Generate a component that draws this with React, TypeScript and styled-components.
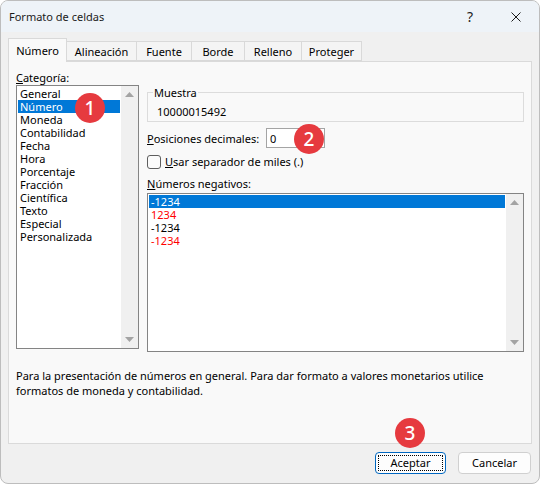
import React, { FC, ReactNode } from 'react'
import styled, { createGlobalStyle } from 'styled-components'

const GlobalStyle = createGlobalStyle`
  html, body {
    margin: 0;
    padding: 0;
    background: #ffffff;
  }
  body {
    font-family: 'Noto Sans', 'Segoe UI', sans-serif;
    font-size: 11px;
    color: #000;
  }
  * {
    box-sizing: border-box;
  }
`

const Dialog = styled.div`
  width: 540px;
  height: 484px;
  display: flex;
  flex-direction: column;
  background: #f0f0f0;
  border: 1px solid #bdbdbd;
  border-radius: 8px;
  overflow: hidden;
`

const TitleBar = styled.div`
  height: 31px;
  flex-shrink: 0;
  display: flex;
  align-items: center;
  justify-content: space-between;
  padding-left: 8px;
  background: #eef3f8;
  color: #1b1b1b;
`

const Caption = styled.div`
  display: flex;
`

const CaptionButton = styled.div`
  width: 46px;
  height: 31px;
  display: flex;
  align-items: center;
  justify-content: center;
  font-size: 14px;
  color: #222;
`

const Body = styled.div`
  flex: 1;
  display: flex;
  flex-direction: column;
  padding: 6px 7px 0;
`

const Tabs = styled.div`
  height: 23px;
  display: flex;
  align-items: flex-end;
`

const Tab = styled.div<{ $w: number; $active?: boolean }>`
  position: relative;
  z-index: ${(p) => (p.$active ? 1 : 0)};
  width: ${(p) => p.$w}px;
  height: ${(p) => (p.$active ? 24 : 20)}px;
  margin-bottom: ${(p) => (p.$active ? -1 : 0)}px;
  display: flex;
  align-items: center;
  justify-content: center;
  padding-bottom: ${(p) => (p.$active ? 1 : 0)}px;
  background: ${(p) => (p.$active ? '#f9f9f9' : '#f4f4f4')};
  border: 1px solid #d9d9d9;
  border-bottom: ${(p) => (p.$active ? 'none' : '1px solid #d9d9d9')};
  border-left: ${(p) => (p.$active ? '1px solid #d9d9d9' : 'none')};
  color: #000;
`

const Panel = styled.div`
  height: 383px;
  flex-shrink: 0;
  display: flex;
  flex-direction: column;
  padding: 8px 7px 0;
  background: #f9f9f9;
  border: 1px solid #dadada;
`

const Columns = styled.div`
  display: grid;
  grid-template-columns: 123px 377px;
  column-gap: 8px;
  align-items: start;
`

const Column = styled.div<{ $top?: number }>`
  display: flex;
  flex-direction: column;
  padding-top: ${(p) => p.$top ?? 0}px;
`

const Label = styled.div<{ $mt?: number }>`
  line-height: 15px;
  margin-top: ${(p) => p.$mt ?? 0}px;
  white-space: nowrap;
`

const ListBox = styled.div<{ $h: number; $mt?: number }>`
  position: relative;
  height: ${(p) => p.$h}px;
  margin-top: ${(p) => p.$mt ?? 0}px;
  display: grid;
  grid-template-columns: 1fr 17px;
  background: #ffffff;
  border: 1px solid #848484;
`

const Items = styled.div`
  padding: 1px;
  overflow: hidden;
`

const Item = styled.div<{ $selected?: boolean; $red?: boolean }>`
  height: 13px;
  line-height: 13px;
  padding-left: 2px;
  white-space: nowrap;
  background: ${(p) => (p.$selected ? '#0078d7' : 'transparent')};
  color: ${(p) => (p.$selected ? '#ffffff' : p.$red ? '#ff0000' : '#000000')};
`

const ScrollBar = styled.div`
  display: flex;
  flex-direction: column;
  justify-content: space-between;
  background: #f0f0f0;
`

const ScrollButton = styled.div`
  height: 17px;
  display: flex;
  align-items: center;
  justify-content: center;
`

const Group = styled.fieldset`
  margin: 0;
  padding: 0 5px 2px;
  border: 1px solid #dcdcdc;
  min-width: 0;
`

const Legend = styled.legend`
  padding: 0 1px;
  line-height: 15px;
`

const Sample = styled.div`
  padding: 4px 0 0 4px;
  line-height: 15px;
`

const FieldRow = styled.div<{ $mt: number }>`
  display: flex;
  align-items: center;
  margin-top: ${(p) => p.$mt}px;
`

const FieldLabel = styled.div`
  width: 119px;
  line-height: 15px;
`

const Anchor = styled.div`
  position: relative;
`

const Input = styled.div`
  width: 59px;
  height: 20px;
  display: flex;
  align-items: center;
  padding-left: 3px;
  background: #ffffff;
  border: 1px solid #a4a4a4;
`

const CheckBox = styled.div`
  width: 14px;
  height: 14px;
  margin-right: 4px;
  background: #fbfbfb;
  border: 1px solid #5e5e5e;
  border-radius: 3px;
`

const Description = styled.p`
  margin: 16px 0 0;
  line-height: 15px;
`

const Footer = styled.div`
  display: flex;
  justify-content: flex-end;
  gap: 12px;
  margin-top: 8px;
  padding-right: 1px;
`

const Button = styled.div<{ $w: number; $default?: boolean }>`
  position: relative;
  width: ${(p) => p.$w}px;
  height: 22px;
  display: flex;
  align-items: center;
  justify-content: center;
  padding-bottom: 1px;
  background: #fdfdfd;
  border: 1px solid ${(p) => (p.$default ? '#0067c0' : '#d0d0d0')};
  border-radius: 4px;
  outline: ${(p) => (p.$default ? '1px dotted #000' : 'none')};
  outline-offset: -4px;
`

const Badge = styled.div<{ $x: number; $y: number }>`
  position: absolute;
  z-index: 2;
  left: ${(p) => p.$x}px;
  top: ${(p) => p.$y}px;
  width: 30px;
  height: 30px;
  border-radius: 50%;
  display: flex;
  align-items: center;
  justify-content: center;
  background: #e63a3f;
  color: #ffffff;
  font-size: 19px;
  font-weight: 500;
  line-height: 1;
`

const Arrow: FC<{ down?: boolean }> = ({ down }) => (
  <svg width="9" height="5" viewBox="0 0 9 5">
    <path d={down ? 'M0 0H9L4.5 5Z' : 'M0 5H9L4.5 0Z'} fill="#a3a3a3" />
  </svg>
)

const List: FC<{ h: number; mt?: number; children: ReactNode; badge?: ReactNode }> = ({ h, mt, children, badge }) => (
  <ListBox $h={h} $mt={mt}>
    <Items>{children}</Items>
    <ScrollBar>
      <ScrollButton>
        <Arrow />
      </ScrollButton>
      <ScrollButton>
        <Arrow down />
      </ScrollButton>
    </ScrollBar>
    {badge}
  </ListBox>
)

const tabs = [
  { label: 'Número', w: 59 },
  { label: 'Alineación', w: 70 },
  { label: 'Fuente', w: 55 },
  { label: 'Borde', w: 53 },
  { label: 'Relleno', w: 57 },
  { label: 'Proteger', w: 60 },
]

const categories = [
  'General',
  'Número',
  'Moneda',
  'Contabilidad',
  'Fecha',
  'Hora',
  'Porcentaje',
  'Fracción',
  'Científica',
  'Texto',
  'Especial',
  'Personalizada',
]

const negatives = [
  { text: '-1234', red: false },
  { text: '1234', red: true },
  { text: '-1234', red: false },
  { text: '-1234', red: true },
]

export default function App() {
  return (
    <>
      <GlobalStyle />
      <Dialog>
        <TitleBar>
          <span>Formato de celdas</span>
          <Caption>
            <CaptionButton>?</CaptionButton>
            <CaptionButton>
              <svg width="10" height="10" viewBox="0 0 10 10">
                <path d="M0.5 0.5L9.5 9.5M9.5 0.5L0.5 9.5" stroke="#1b1b1b" strokeWidth="1" />
              </svg>
            </CaptionButton>
          </Caption>
        </TitleBar>
        <Body>
          <Tabs>
            {tabs.map((t, i) => (
              <Tab key={t.label} $w={t.w} $active={i === 0}>
                {t.label}
              </Tab>
            ))}
          </Tabs>
          <Panel>
            <Columns>
              <Column>
                <Label>
                  <u>C</u>ategoría:
                </Label>
                <List h={264} badge={<Badge $x={58} $y={7}>1</Badge>}>
                  {categories.map((c) => (
                    <Item key={c} $selected={c === 'Número'}>
                      {c}
                    </Item>
                  ))}
                </List>
              </Column>
              <Column $top={15}>
                <Group>
                  <Legend>Muestra</Legend>
                  <Sample>10000015492</Sample>
                </Group>
                <FieldRow $mt={6}>
                  <FieldLabel>
                    <u>P</u>osiciones decimales:
                  </FieldLabel>
                  <Anchor>
                    <Input>0</Input>
                    <Badge $x={28} $y={-4}>2</Badge>
                  </Anchor>
                </FieldRow>
                <FieldRow $mt={6}>
                  <CheckBox />
                  <span>
                    <u>U</u>sar separador de miles (.)
                  </span>
                </FieldRow>
                <Label $mt={7}>
                  <u>N</u>úmeros negativos:
                </Label>
                <List h={159} mt={2}>
                  {negatives.map((n, i) => (
                    <Item key={i} $selected={i === 0} $red={n.red}>
                      {n.text}
                    </Item>
                  ))}
                </List>
              </Column>
            </Columns>
            <Description>
              Para la presentación de números en general. Para dar formato a valores monetarios utilice
              <br />
              formatos de moneda y contabilidad.
            </Description>
          </Panel>
          <Footer>
            <Anchor>
              <Button $w={71} $default>
                Aceptar
              </Button>
              <Badge $x={20} $y={-34}>3</Badge>
            </Anchor>
            <Button $w={73}>Cancelar</Button>
          </Footer>
        </Body>
      </Dialog>
    </>
  )
}
